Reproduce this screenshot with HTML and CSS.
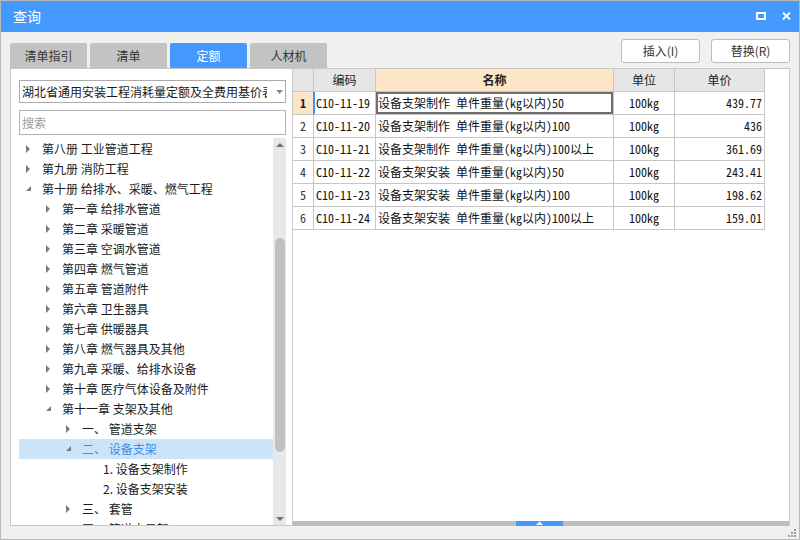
FILE: index.html
```html
<!DOCTYPE html>
<html lang="zh-CN">
<head>
<meta charset="utf-8">
<title>查询</title>
<link rel="stylesheet" href="styles.css">
</head>
<body>
<div class="window">
  <div class="titlebar">
    <span class="title">查询</span>
    <div class="win-btns">
      <svg class="ico-max" width="10" height="8" viewBox="0 0 10 8"><rect x="1" y="1" width="8" height="6" fill="none" stroke="#fff" stroke-width="2"/></svg>
      <svg class="ico-close" width="9" height="8" viewBox="0 0 9 8"><path d="M1 0.5 L8 7.5 M8 0.5 L1 7.5" stroke="#fff" stroke-width="1.8" fill="none"/></svg>
    </div>
  </div>
  <div class="toolbar">
    <div class="tabs">
      <div class="tab">清单指引</div>
      <div class="tab">清单</div>
      <div class="tab active">定额</div>
      <div class="tab">人材机</div>
    </div>
    <div class="actions">
      <button class="btn">插入(I)</button>
      <button class="btn">替换(R)</button>
    </div>
  </div>
  <div class="main">
    <div class="left">
      <div class="select">
        <span class="select-text">湖北省通用安装工程消耗量定额及全费用基价表</span>
        <svg class="caret" width="7" height="4" viewBox="0 0 7 4"><path d="M0 0 L7 0 L3.5 4 Z" fill="#8a8a8a"/></svg>
      </div>
      <div class="search">搜索</div>
      <div class="tree-wrap">
        <div class="tree">
          <div class="node l0"><svg class="tw" width="18" height="20" viewBox="0 0 18 20"><path d="M2 6 L6 10 L2 14 Z" fill="#7a7a7a"/></svg><span>第八册 工业管道工程</span></div>
          <div class="node l0"><svg class="tw" width="18" height="20" viewBox="0 0 18 20"><path d="M2 6 L6 10 L2 14 Z" fill="#7a7a7a"/></svg><span>第九册 消防工程</span></div>
          <div class="node l0"><svg class="tw" width="18" height="20" viewBox="0 0 18 20"><path d="M7 7 L7 12 L2 12 Z" fill="#7a7a7a"/></svg><span>第十册 给排水、采暖、燃气工程</span></div>
          <div class="node l1"><svg class="tw" width="18" height="20" viewBox="0 0 18 20"><path d="M2 6 L6 10 L2 14 Z" fill="#7a7a7a"/></svg><span>第一章 给排水管道</span></div>
          <div class="node l1"><svg class="tw" width="18" height="20" viewBox="0 0 18 20"><path d="M2 6 L6 10 L2 14 Z" fill="#7a7a7a"/></svg><span>第二章 采暖管道</span></div>
          <div class="node l1"><svg class="tw" width="18" height="20" viewBox="0 0 18 20"><path d="M2 6 L6 10 L2 14 Z" fill="#7a7a7a"/></svg><span>第三章 空调水管道</span></div>
          <div class="node l1"><svg class="tw" width="18" height="20" viewBox="0 0 18 20"><path d="M2 6 L6 10 L2 14 Z" fill="#7a7a7a"/></svg><span>第四章 燃气管道</span></div>
          <div class="node l1"><svg class="tw" width="18" height="20" viewBox="0 0 18 20"><path d="M2 6 L6 10 L2 14 Z" fill="#7a7a7a"/></svg><span>第五章 管道附件</span></div>
          <div class="node l1"><svg class="tw" width="18" height="20" viewBox="0 0 18 20"><path d="M2 6 L6 10 L2 14 Z" fill="#7a7a7a"/></svg><span>第六章 卫生器具</span></div>
          <div class="node l1"><svg class="tw" width="18" height="20" viewBox="0 0 18 20"><path d="M2 6 L6 10 L2 14 Z" fill="#7a7a7a"/></svg><span>第七章 供暖器具</span></div>
          <div class="node l1"><svg class="tw" width="18" height="20" viewBox="0 0 18 20"><path d="M2 6 L6 10 L2 14 Z" fill="#7a7a7a"/></svg><span>第八章 燃气器具及其他</span></div>
          <div class="node l1"><svg class="tw" width="18" height="20" viewBox="0 0 18 20"><path d="M2 6 L6 10 L2 14 Z" fill="#7a7a7a"/></svg><span>第九章 采暖、给排水设备</span></div>
          <div class="node l1"><svg class="tw" width="18" height="20" viewBox="0 0 18 20"><path d="M2 6 L6 10 L2 14 Z" fill="#7a7a7a"/></svg><span>第十章 医疗气体设备及附件</span></div>
          <div class="node l1"><svg class="tw" width="18" height="20" viewBox="0 0 18 20"><path d="M7 7 L7 12 L2 12 Z" fill="#7a7a7a"/></svg><span>第十一章 支架及其他</span></div>
          <div class="node l2"><svg class="tw" width="18" height="20" viewBox="0 0 18 20"><path d="M2 6 L6 10 L2 14 Z" fill="#7a7a7a"/></svg><span>一、 管道支架</span></div>
          <div class="node l2 selected"><svg class="tw" width="18" height="20" viewBox="0 0 18 20"><path d="M7 7 L7 12 L2 12 Z" fill="#7a7a7a"/></svg><span>二、 设备支架</span></div>
          <div class="node l3"><span class="tw-space"></span><span>1. 设备支架制作</span></div>
          <div class="node l3"><span class="tw-space"></span><span>2. 设备支架安装</span></div>
          <div class="node l2"><svg class="tw" width="18" height="20" viewBox="0 0 18 20"><path d="M2 6 L6 10 L2 14 Z" fill="#7a7a7a"/></svg><span>三、 套管</span></div>
          <div class="node l2"><svg class="tw" width="18" height="20" viewBox="0 0 18 20"><path d="M2 6 L6 10 L2 14 Z" fill="#7a7a7a"/></svg><span>四、 管道支吊架</span></div>
        </div>
        <div class="vscroll">
          <svg class="sarrow" width="8" height="5" viewBox="0 0 8 5"><path d="M0 5 L4 1 L8 5 Z" fill="#707070"/></svg>
          <div class="vthumb" style="margin-top:91px;height:214px"></div>
          <div class="vspacer"></div>
          <svg class="sarrow down" width="8" height="5" viewBox="0 0 8 5"><path d="M0 0 L8 0 L4 4 Z" fill="#707070"/></svg>
        </div>
      </div>
    </div>
    <div class="right">
      <div class="grid">
        <div class="grow head">
          <div class="cell num"></div>
          <div class="cell">编码</div>
          <div class="cell hl">名称</div>
          <div class="cell">单位</div>
          <div class="cell">单价</div>
        </div>
        <div class="grow current">
          <div class="cell num">1</div>
          <div class="cell code">C10-11-19</div>
          <div class="cell name focus">设备支架制作 单件重量(kg以内)50</div>
          <div class="cell unit">100kg</div>
          <div class="cell price">439.77</div>
        </div>
        <div class="grow">
          <div class="cell num">2</div>
          <div class="cell code">C10-11-20</div>
          <div class="cell name">设备支架制作 单件重量(kg以内)100</div>
          <div class="cell unit">100kg</div>
          <div class="cell price">436</div>
        </div>
        <div class="grow">
          <div class="cell num">3</div>
          <div class="cell code">C10-11-21</div>
          <div class="cell name">设备支架制作 单件重量(kg以内)100以上</div>
          <div class="cell unit">100kg</div>
          <div class="cell price">361.69</div>
        </div>
        <div class="grow">
          <div class="cell num">4</div>
          <div class="cell code">C10-11-22</div>
          <div class="cell name">设备支架安装 单件重量(kg以内)50</div>
          <div class="cell unit">100kg</div>
          <div class="cell price">243.41</div>
        </div>
        <div class="grow">
          <div class="cell num">5</div>
          <div class="cell code">C10-11-23</div>
          <div class="cell name">设备支架安装 单件重量(kg以内)100</div>
          <div class="cell unit">100kg</div>
          <div class="cell price">198.62</div>
        </div>
        <div class="grow">
          <div class="cell num">6</div>
          <div class="cell code">C10-11-24</div>
          <div class="cell name">设备支架安装 单件重量(kg以内)100以上</div>
          <div class="cell unit">100kg</div>
          <div class="cell price">159.01</div>
        </div>
      </div>
      <div class="hscroll">
        <div class="hthumb" style="margin-left:223px">
          <svg width="7" height="4" viewBox="0 0 7 4"><path d="M0 4 L3.5 0.5 L7 4 Z" fill="#fff"/></svg>
        </div>
      </div>
    </div>
  </div>
  <div class="statusbar">
    <svg class="grip" width="10" height="10" viewBox="0 0 10 10">
      <rect x="7" y="1" width="2" height="2" fill="#9a9a9a"/>
      <rect x="4" y="4" width="2" height="2" fill="#9a9a9a"/>
      <rect x="7" y="4" width="2" height="2" fill="#9a9a9a"/>
      <rect x="1" y="7" width="2" height="2" fill="#9a9a9a"/>
      <rect x="4" y="7" width="2" height="2" fill="#9a9a9a"/>
      <rect x="7" y="7" width="2" height="2" fill="#9a9a9a"/>
    </svg>
  </div>
</div>
</body>
</html>
```
FILE: styles.css
```css
* { box-sizing: border-box; }
html, body { margin: 0; padding: 0; }
body {
  font-family: "Noto Sans CJK SC", "Microsoft YaHei", sans-serif;
  font-size: 12px;
  color: #1a1a1a;
  background: #fff;
}
.window {
  width: 800px;
  height: 540px;
  border: 1px solid #b8b8b8;
  background: #f0f0f0;
  display: flex;
  flex-direction: column;
  overflow: hidden;
}
.titlebar {
  height: 31px;
  flex-shrink: 0;
  background: #4499ff;
  color: #fff;
  display: flex;
  align-items: center;
  padding: 0 8px 1px 12px;
}
.title { flex: 1; font-size: 14px; line-height: 20px; }
.win-btns { display: flex; align-items: center; gap: 16px; }
.win-btns svg { display: block; }

.toolbar {
  height: 36px;
  flex-shrink: 0;
  display: flex;
  justify-content: space-between;
  padding: 0 9px;
}
.tabs { display: flex; gap: 3px; align-self: flex-end; }
.tab {
  width: 77px;
  height: 25px;
  background: #c3c3c3;
  color: #333;
  border-radius: 2px 2px 0 0;
  display: flex;
  align-items: center;
  justify-content: center;
  line-height: 16px;
}
.tab.active { background: #4499ff; color: #fff; }
.actions { display: flex; gap: 11px; padding-top: 7px; }
.btn {
  width: 79px;
  height: 24px;
  padding: 0;
  background: #fff;
  border: 1px solid #bdbdbd;
  border-radius: 3px;
  font-family: inherit;
  font-size: 12px;
  color: #333;
  line-height: 16px;
}

.main {
  height: 458px;
  flex-shrink: 0;
  display: flex;
  padding: 0 9px;
}
.left {
  width: 282px;
  background: #fff;
  border: 1px solid #c8c8c8;
  border-right: none;
  padding: 11px 6px 0 8px;
  display: flex;
  flex-direction: column;
}
.select {
  height: 23px;
  flex-shrink: 0;
  border: 1px solid #ababab;
  display: flex;
  align-items: center;
  padding-left: 2px;
}
.select-text {
  width: 245px;
  overflow: hidden;
  white-space: nowrap;
  line-height: 16px;
  color: #1a1a1a;
}
.caret { margin-left: 9px; display: block; }
.search {
  height: 25px;
  flex-shrink: 0;
  margin-top: 7px;
  border: 1px solid #b3b3b3;
  color: #9c9c9c;
  padding-left: 2px;
  display: flex;
  align-items: center;
  line-height: 16px;
}
.tree-wrap {
  flex: 1;
  min-height: 0;
  margin-top: 3px;
  display: flex;
  overflow: hidden;
}
.tree { flex: 1; padding-top: 1px; overflow: hidden; }
.node {
  height: 20px;
  display: flex;
  align-items: center;
  white-space: nowrap;
  line-height: 16px;
}
.node .tw, .node .tw-space { display: block; width: 18px; height: 20px; flex-shrink: 0; }
.l0 { padding-left: 5px; }
.l1 { padding-left: 25px; }
.l2 { padding-left: 45px; }
.l3 { padding-left: 66px; }
.node.selected { background: #cce4f8; color: #3a8ee6; }

.vscroll {
  width: 13px;
  background: #e8e8e8;
  display: flex;
  flex-direction: column;
  align-items: center;
}
.sarrow { display: block; margin-top: 4px; flex-shrink: 0; }
.sarrow.down { margin-top: 0; margin-bottom: 3px; }
.vthumb { width: 10px; background: #c1c1c1; border-radius: 5px; flex-shrink: 0; }
.vspacer { flex: 1; }

.right {
  width: 498px;
  background: #fff;
  border: 1px solid #c8c8c8;
  border-bottom: none;
  display: flex;
  flex-direction: column;
}
.grid {
  flex: 1;
  font-family: "Noto Sans Mono CJK SC", "Noto Sans CJK SC", monospace;
}
.grow {
  display: grid;
  grid-template-columns: 21px 62px 238px 61px 90px;
  height: 23px;
}
.cell {
  border-right: 1px solid #c6c6c6;
  border-bottom: 1px solid #c6c6c6;
  display: flex;
  align-items: center;
  white-space: nowrap;
  overflow: hidden;
  line-height: 16px;
  color: #111;
}
.head .cell {
  background: #e6e6e6;
  justify-content: center;
  font-family: "Noto Sans CJK SC", sans-serif;
  color: #222;
}
.head .cell.hl { background: #fde5c7; font-weight: bold; }
.cell.num { justify-content: center; color: #333; }
.cell.code { padding-left: 2px; }
.cell.name { padding-left: 2px; }
.cell.unit { justify-content: center; }
.cell.price { justify-content: flex-end; padding-right: 2px; }
.current .cell.num {
  background: #fde5c7;
  font-weight: bold;
  color: #222;
  border-right-color: #3f92f5;
}
.current .cell.code { box-shadow: inset 1px 0 0 #3f92f5; }
.cell.focus { box-shadow: inset 0 0 0 2px #6e6e6e; }

.hscroll {
  height: 5px;
  flex-shrink: 0;
  background: #bdbdbd;
  display: flex;
}
.hthumb {
  width: 47px;
  height: 5px;
  background: #4499ff;
  display: flex;
  justify-content: center;
  align-items: flex-start;
}
.hthumb svg { display: block; }

.statusbar {
  flex: 1;
  display: flex;
  justify-content: flex-end;
  align-items: flex-end;
  padding: 0 2px 1px 0;
}
.grip { display: block; }
```
